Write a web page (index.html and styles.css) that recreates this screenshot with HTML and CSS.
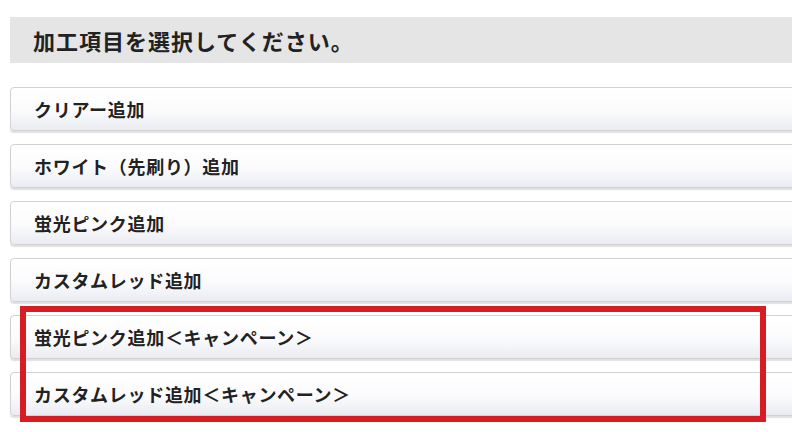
FILE: index.html
```html
<!DOCTYPE html>
<html lang="ja">
  <head>
    <meta charset="UTF-8" />
    <meta name="viewport" content="width=device-width, initial-scale=1.0" />
    <title>加工項目選択</title>
    <link rel="stylesheet" href="styles.css">
  </head>
  <body>
    <div class="option-panel">
      <h2 class="option-title">加工項目を選択してください。</h2>

      <ul class="option-list">
        <li class="option-item">クリアー追加</li>
        <li class="option-item">ホワイト（先刷り）追加</li>
        <li class="option-item">蛍光ピンク追加</li>
        <li class="option-item">カスタムレッド追加</li>
        <li class="option-item">蛍光ピンク追加＜キャンペーン＞</li>
        <li class="option-item">カスタムレッド追加＜キャンペーン＞</li>

        <!-- annotation frame over the campaign rows -->
        <li class="highlight-frame" aria-hidden="true"></li>
      </ul>
    </div>
  </body>
</html>
```

FILE: styles.css
```css
body {
  margin: 0;
  padding: 0;
  background: #fff;
  font-family: "Noto Sans CJK JP", "Noto Sans", sans-serif;
  color: #222;
  overflow: hidden;
}

.option-panel {
  width: 820px;
  padding: 17px 0 0 10px;
}

.option-title {
  margin: 0;
  height: 46px;
  padding-left: 23px;
  background-color: #e5e5e5;
  font-size: 22px;
  font-weight: bold;
  line-height: 46px;
  letter-spacing: 1px;
}

.option-list {
  position: relative;
  list-style: none;
  margin: 24px 0 0;
  padding: 0;
}

.option-item {
  box-sizing: border-box;
  height: 44px;
  margin-bottom: 13px;
  padding-left: 23px;
  border: 1px solid #d2d2d2;
  border-radius: 4px;
  background: linear-gradient(to bottom, #ffffff 0%, #fbfbfd 55%, #eaecf2 100%);
  box-shadow: 0 2px 1px rgba(0, 0, 0, 0.12);
  font-size: 18px;
  font-weight: bold;
  line-height: 42px;
  letter-spacing: 0.7px;
}

.highlight-frame {
  position: absolute;
  top: 219px;
  left: 10px;
  width: 746px;
  height: 116px;
  box-sizing: border-box;
  border: 6px solid #d71d24;
}
```
